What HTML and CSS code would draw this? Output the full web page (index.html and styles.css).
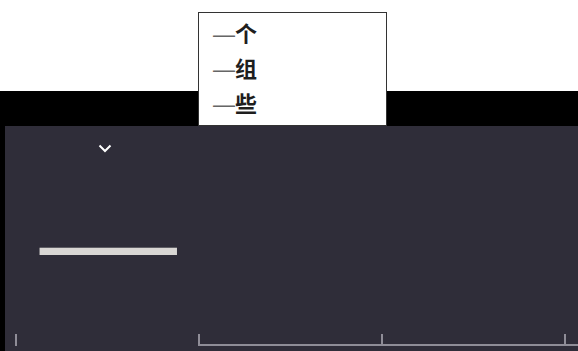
FILE: index.html
```html
<!DOCTYPE html>
<html lang="zh">
<head>
    <meta charset="UTF-8">
    <meta name="viewport" content="width=device-width, initial-scale=1.0">
    <title>一</title>
    <link rel="stylesheet" href="styles.css">
</head>
<body>
    <div class="top-area"></div>
    <div class="black-band"></div>

    <div class="panel">
        <div class="toggle-row">
            <svg class="chevron" width="14" height="9" viewBox="0 0 14 9">
                <polyline points="1.5,1.5 7,7 12.5,1.5" fill="none" stroke="#ffffff" stroke-width="2"/>
            </svg>
        </div>

        <div class="big-char">一</div>

        <div class="axis">
            <div class="axis-seg first"></div>
            <div class="axis-seg"></div>
            <div class="axis-seg"></div>
            <div class="axis-seg last"></div>
        </div>
    </div>

    <!-- suggestion popup -->
    <ul class="suggest">
        <li><span class="dash">—</span><b>个</b></li>
        <li><span class="dash">—</span><b>组</b></li>
        <li><span class="dash">—</span><b>些</b></li>
    </ul>
</body>
</html>
```

FILE: styles.css
```css
body {
    margin: 0;
    width: 578px;
    height: 351px;
    overflow: hidden;
    background-color: #000;
    font-family: "Noto Sans CJK SC", "Noto Sans", sans-serif;
    position: relative;
}
.top-area {
    height: 91px;
    background-color: #fff;
}
.black-band {
    height: 35px;
    background-color: #000;
}
.panel {
    margin-left: 5px;
    height: 225px;
    background-color: #2f2d39;
    display: flex;
    flex-direction: column;
}
.toggle-row {
    padding: 18px 0 0 93px;
    height: 11px;
}
.chevron {
    display: block;
}
.big-char {
    margin-top: 72px;
    padding-left: 28px;
    height: 40px;
    line-height: 40px;
    font-size: 150px;
    color: #d9d7d4;
    transform: scaleY(0.6);
}
.axis {
    margin-top: auto;
    margin-bottom: 5px;
    display: flex;
    padding-left: 10px;
    height: 12px;
}
.axis-seg {
    width: 183px;
    flex: none;
    border-left: 2px solid #8f8d97;
    box-sizing: border-box;
}
.axis-seg + .axis-seg {
    border-bottom: 2px solid #8f8d97;
}
.axis-seg.last {
    width: 20px;
}
.suggest {
    position: absolute;
    left: 198px;
    top: 12px;
    width: 189px;
    height: 114px;
    box-sizing: border-box;
    margin: 0;
    padding: 2px 0 0 14px;
    list-style: none;
    background-color: #fff;
    border: 1px solid #333;
}
.suggest li {
    height: 35px;
    line-height: 35px;
    font-size: 22px;
    color: #1e1e1e;
}
.dash {
    color: #666;
    font-family: "Liberation Sans", sans-serif;
    font-weight: normal;
}
.suggest b {
    font-weight: bold;
}
```
